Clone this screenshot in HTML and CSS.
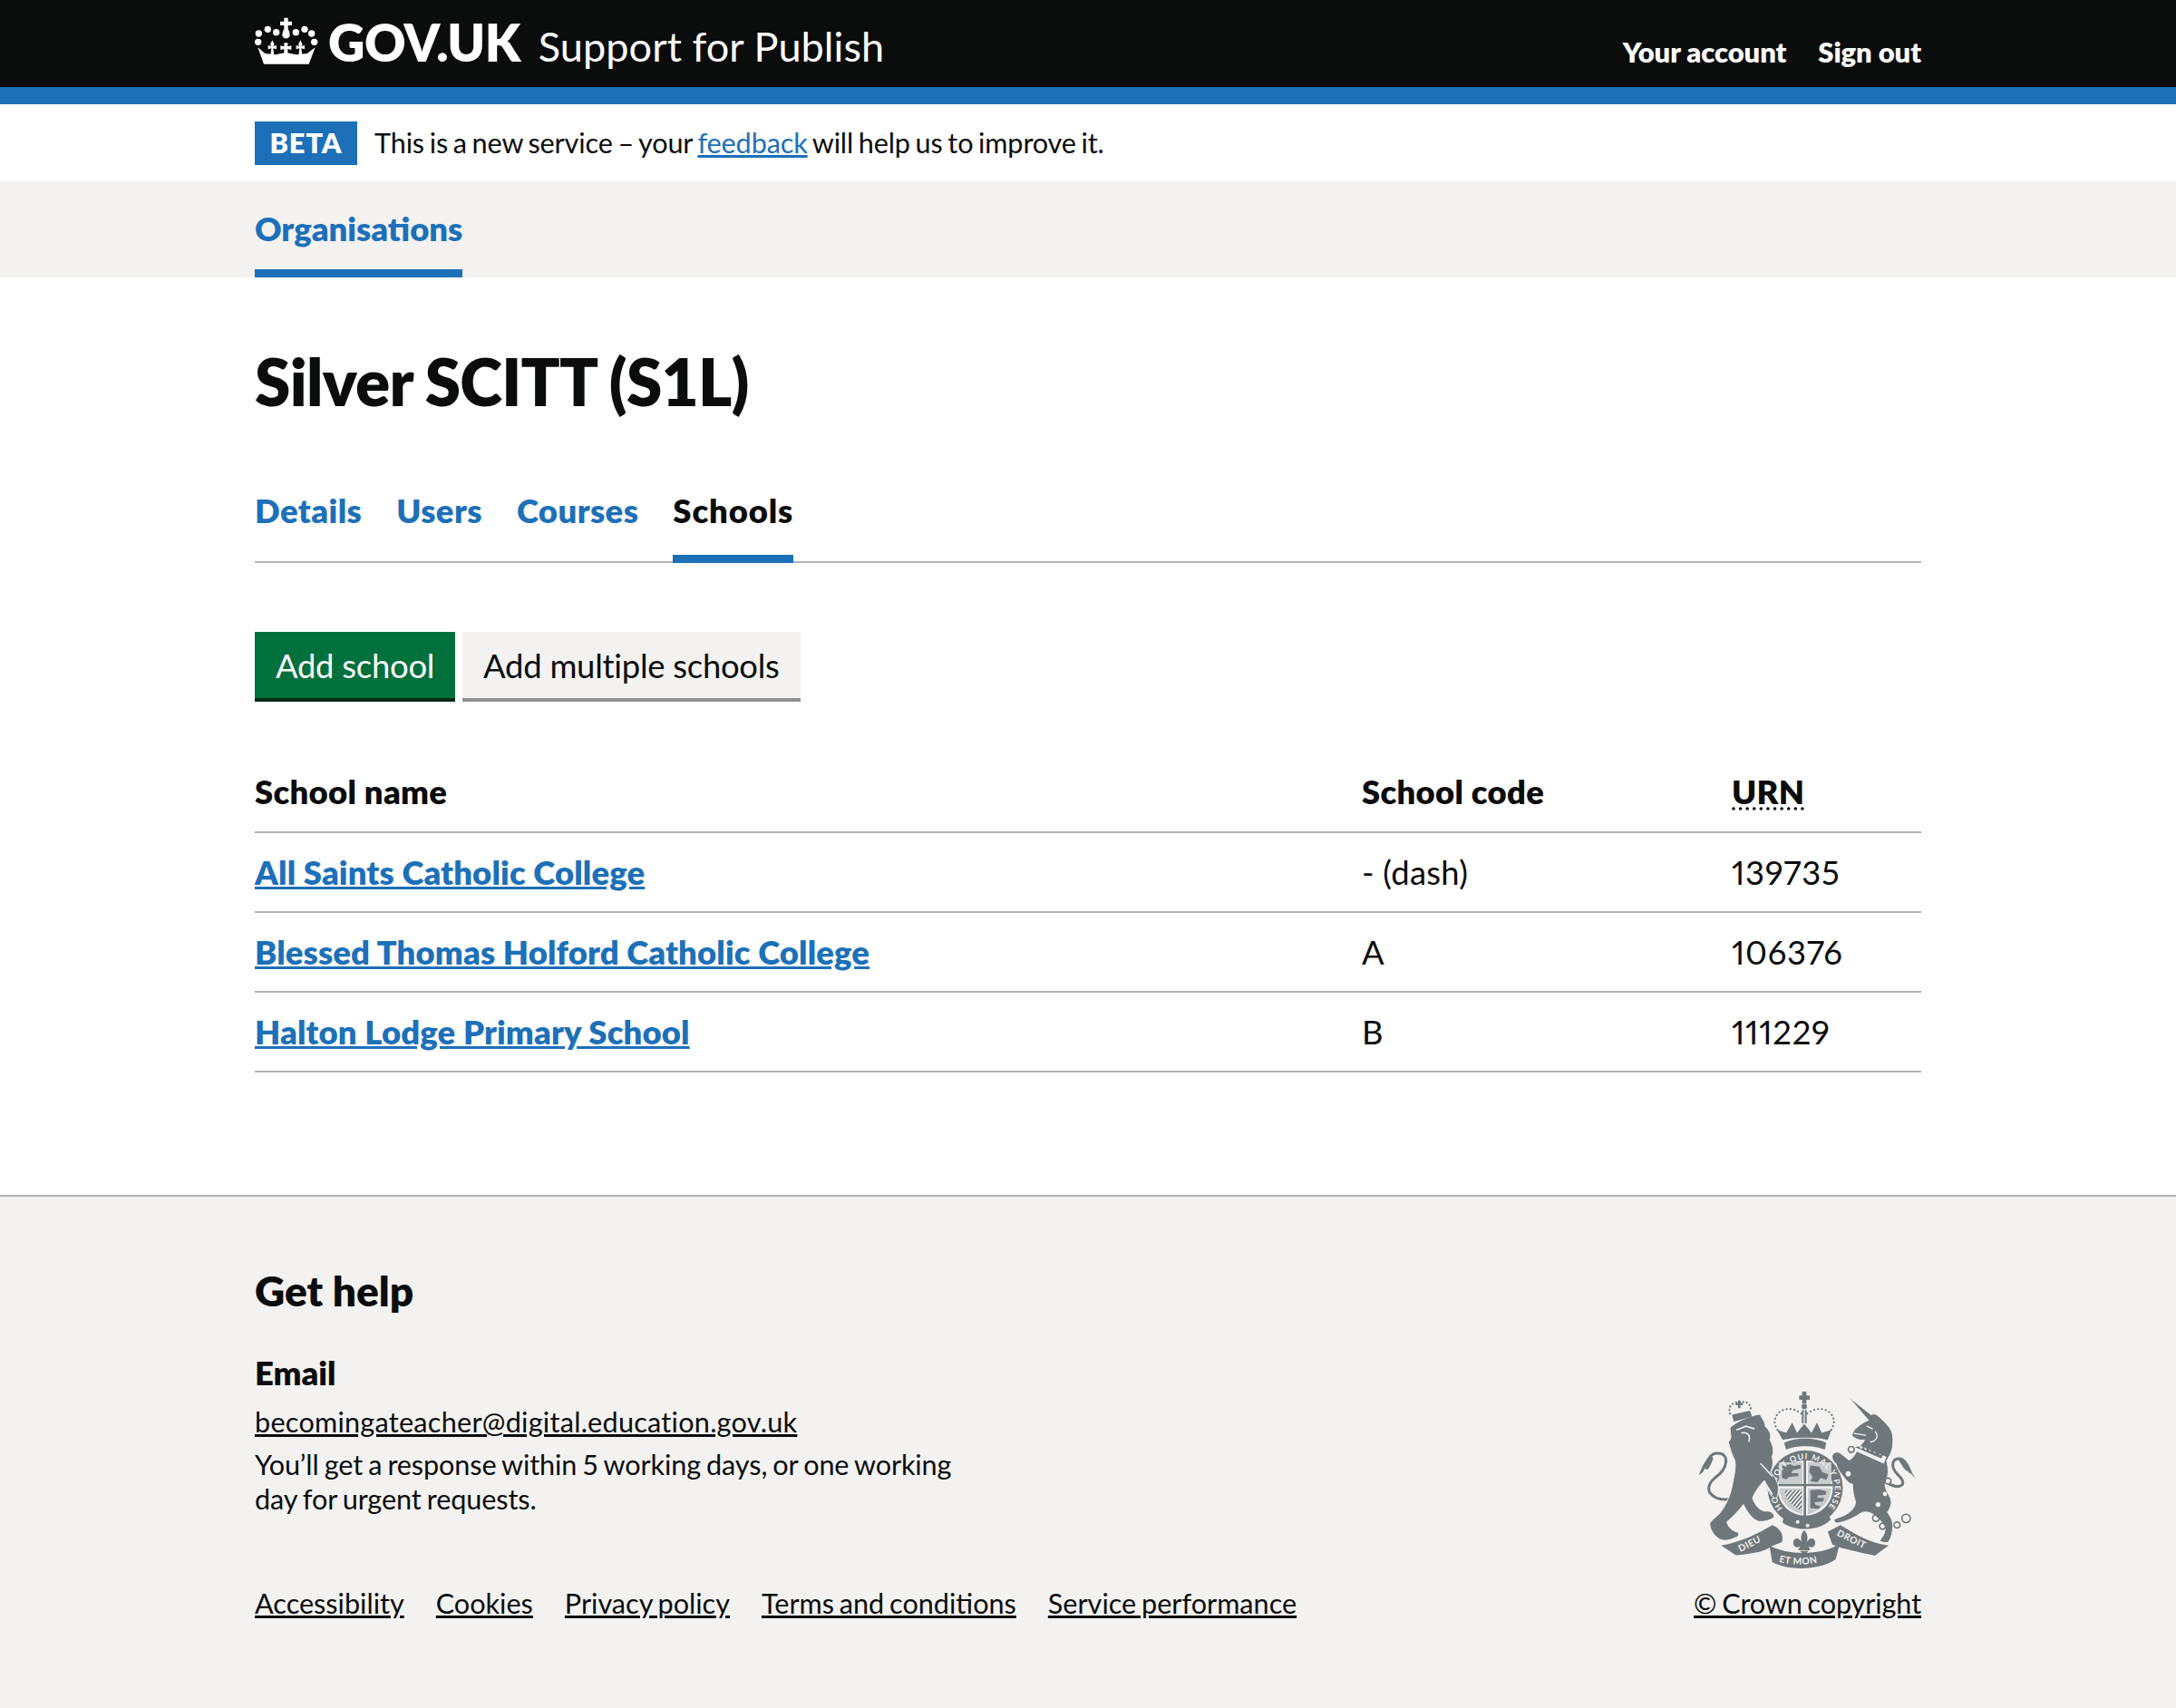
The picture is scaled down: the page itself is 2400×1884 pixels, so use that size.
FILE: index.html
```html
<!DOCTYPE html>
<html lang="en">
<head>
<meta charset="utf-8">
<title>Silver SCITT (S1L) - Support for Publish</title>
<link rel="stylesheet" href="styles.css">
</head>
<body>
<header class="site-header">
  <div class="wrap header-row">
    <div class="brand">
      <svg class="crown" viewBox="32 25 210 165" aria-hidden="true">
        <g fill="#fff">
          <circle cx="45" cy="82" r="11"/><circle cx="75" cy="68" r="11"/><circle cx="103" cy="78" r="11"/>
          <circle cx="168" cy="78" r="11"/><circle cx="197" cy="68" r="11"/><circle cx="220" cy="82" r="11"/>
          <circle cx="43" cy="110" r="11"/><circle cx="229" cy="110" r="11"/>
          <path d="M129 30h13v12h13v13h-13v12c5 8 6 16 6 22a13 13 0 0 1-25 0c0-6 1-14 6-22V55h-13V42h13z"/>
          <path d="M42 128L66 148L100 152L135 145L170 152L205 148L232 128L211 183H62Z"/>
          <path d="M90 104l7 14-4 6 11-3v13l-11-3 3 24h-12l3-24-11 3v-13l11 3-4-6z"/>
          <path d="M183 104l7 14-4 6 11-3v13l-11-3 3 24h-12l3-24-11 3v-13l11 3-4-6z"/>
          <path d="M129 113h12v12l12-3v14l-12-3v18h-12v-18l-12 3v-14l12 3z"/>
        </g>
      </svg>
      <span class="logotype">GOV.UK</span>
      <span class="service">Support for Publish</span>
    </div>
    <nav class="account">
      <a href="#">Your account</a>
      <a href="#">Sign out</a>
    </nav>
  </div>
</header>

<div class="wrap phase">
  <strong class="tag">BETA</strong>
  <span class="phase-text">This is a new service – your <a href="#">feedback</a> will help us to improve it.</span>
</div>

<nav class="primary">
  <div class="wrap"><a class="primary-item" href="#">Organisations</a></div>
</nav>

<main class="wrap main">
  <h1 class="title">Silver SCITT (S1L)</h1>
  <nav class="tabs">
    <a href="#">Details</a>
    <a href="#">Users</a>
    <a href="#">Courses</a>
    <a href="#" class="current">Schools</a>
  </nav>
  <div class="actions">
    <a class="btn btn-green" href="#">Add school</a>
    <a class="btn btn-grey" href="#">Add multiple schools</a>
  </div>
  <table class="schools">
    <colgroup><col class="c1"><col class="c2"><col class="c3"></colgroup>
    <thead>
      <tr><th>School name</th><th>School code</th><th><abbr title="Unique reference number">URN</abbr></th></tr>
    </thead>
    <tbody>
      <tr><td><a href="#">All Saints Catholic College</a></td><td>- (dash)</td><td>139735</td></tr>
      <tr><td><a href="#">Blessed Thomas Holford Catholic College</a></td><td>A</td><td>106376</td></tr>
      <tr><td><a href="#">Halton Lodge Primary School</a></td><td>B</td><td>111229</td></tr>
    </tbody>
  </table>
</main>

<footer class="footer">
  <div class="wrap">
    <div class="footer-top">
      <div class="help">
        <h2>Get help</h2>
        <h3>Email</h3>
        <p class="mail"><a href="#">becomingateacher@digital.education.gov.uk</a></p>
        <p class="note">You’ll get a response within 5 working days, or one working day for urgent requests.</p>
      </div>
      <svg class="crest" viewBox="100 45 722 590" aria-hidden="true">
        <defs>
          <path id="garterArc" d="M381 432A98 98 0 1 1 529 432"/>
          <path id="mottoCentre" d="M368 610Q450 632 540 600"/>
          <pattern id="harp" width="10" height="10" patternUnits="userSpaceOnUse" patternTransform="rotate(40)">
            <rect width="10" height="10" fill="#f3f2f1"/><rect width="5" height="10" fill="#6f777b"/>
          </pattern>
        </defs>
        <g fill="#6f777b" stroke="none">
          <!-- lion tail -->
          <path fill="none" stroke="#6f777b" stroke-width="9" d="M210 402C150 410 108 372 155 332C200 300 205 250 165 250C148 248 135 262 128 285"/>
          <path d="M102 322C112 296 122 272 142 258L150 266C140 290 134 312 120 300C120 310 112 316 102 322Z"/>
          <!-- unicorn tail -->
          <path fill="none" stroke="#6f777b" stroke-width="9" d="M722 345C770 375 800 355 762 320C735 292 745 265 770 268C790 272 800 300 805 315"/>
          <path d="M820 332C805 310 800 285 775 264L765 272C780 295 790 315 802 308C804 318 812 326 820 332Z"/>
          <!-- central crown -->
          <rect x="445" y="45" width="14" height="40"/>
          <rect x="435" y="58" width="35" height="14"/>
          <circle cx="452" cy="95" r="9"/>
          <rect x="444" y="106" width="6" height="44"/><rect x="454" y="106" width="6" height="44"/>
          <path d="M362 172L392 182L412 148L428 182L452 152L476 182L494 148L510 182L542 172L530 205C490 195 420 195 380 205Z"/>
          <path d="M385 216C420 196 490 196 525 216L520 238C490 222 420 222 392 238Z"/>
          <!-- garter -->
          <circle cx="455" cy="365" r="125"/>
          <path d="M385 450C420 490 490 495 530 450L540 470C500 510 420 510 380 480Z"/>
          <!-- ribbons -->
          <path d="M176 556C250 542 300 515 346 488C372 498 386 522 378 545L340 560C330 572 290 584 225 588Z"/>
          <path d="M336 556C400 590 510 590 570 550L556 602C500 640 400 640 346 612Z"/>
          <path d="M530 510L572 488C620 518 670 548 732 556L686 590C620 576 560 562 545 552Z"/>
          <!-- fleur -->
          <path d="M452 505C465 520 465 535 458 548C470 525 492 530 488 552C484 565 470 565 465 556L472 572H432L439 556C434 565 420 565 416 552C412 530 434 525 446 548C439 535 439 520 452 505Z"/>
          <path d="M437 574H467L452 586Z"/>
        </g>
        <g fill="none" stroke="#6f777b" stroke-width="7" stroke-linecap="round">
          <path stroke-dasharray="0 13" d="M442 118C400 85 350 110 354 152C358 168 366 176 372 180"/>
          <path stroke-dasharray="0 13" d="M462 118C505 85 555 110 550 152C546 168 540 176 534 180"/>
        </g>
        <!-- shield -->
        <circle cx="455" cy="365" r="92" fill="#f3f2f1"/>
        <g fill="#6f777b">
          <path d="M368 356V280H446V356ZM464 280H542V356H464ZM368 366H446V452C400 440 372 410 368 366ZM464 366H542C538 410 510 440 464 452Z" fill="#c9cccd"/>
          <rect x="450" y="268" width="8" height="195"/>
          <rect x="364" y="352" width="182" height="7"/>
          <path d="M378 292l28-6 10 6 24-4v12l-26 6-6 10 24 0v10l-30 2-10 8-14-4z"/>
          <path d="M472 290l30 4 10 18 20 8-6 18-20-6-10 14-24-4 8-14-12-16z"/>
          <path d="M386 372H444V440C410 428 392 404 386 372Z" fill="url(#harp)"/>
          <path d="M472 372l30-2 24 6-4 12-26 2 0 8 22 0-4 12-28 2 4 10 16 2-6 10-28-2z"/>
        </g>
        <g>
          <text class="garter"><textPath href="#garterArc">HONI SOIT QUI MAL Y PENSE</textPath></text>
        </g>
        <!-- lion -->
        <path fill="#6f777b" stroke="#f3f2f1" stroke-width="3" d="M205 165C225 145 270 125 305 120C312 135 325 150 322 160C335 170 345 190 338 205C350 225 352 245 345 262C352 285 345 300 340 312C355 328 368 350 366 372C366 385 362 395 358 400C345 395 335 385 332 370C322 355 322 345 320 340C305 355 290 375 280 398C290 425 305 440 322 442C340 440 352 448 352 462C340 472 320 478 300 476C280 470 262 445 250 420C235 440 215 460 195 478C200 495 212 508 232 512C238 520 230 530 222 530C205 540 185 542 170 535C150 522 138 500 138 482C150 465 165 458 172 448C190 425 205 395 212 360C220 320 225 300 222 275C212 255 205 235 200 212C208 205 210 195 207 185Z"/>
        <g fill="none" stroke="#f3f2f1" stroke-width="5" stroke-linecap="round">
          <path d="M228 172L258 160L285 168"/>
          <path d="M245 182C262 178 275 190 268 210"/>
          <path d="M308 285L345 325"/>
          <path d="M320 345L345 385"/>
        </g>
        <!-- lion crown -->
        <g fill="#6f777b">
          <path d="M212 122L272 108L278 128L218 145Z"/>
          <rect x="232" y="74" width="8" height="26"/><rect x="224" y="82" width="24" height="8"/>
          <path fill="none" stroke="#6f777b" stroke-width="7" stroke-linecap="round" stroke-dasharray="0 12" d="M205 118C195 90 225 75 240 82C262 72 282 95 272 112"/>
        </g>
        <!-- unicorn -->
        <path fill="#6f777b" stroke="#f3f2f1" stroke-width="3" d="M598 62L674 122C680 118 686 118 692 122C710 135 722 148 735 165C748 182 748 205 745 230C742 250 732 262 726 275C730 295 735 320 722 345C716 360 728 380 738 398C745 415 738 432 728 445C740 462 750 480 745 505C742 525 738 535 730 546C718 548 708 545 702 540C712 528 722 512 720 498C715 480 700 468 680 452C668 445 655 442 640 448C620 462 595 475 570 480C560 484 552 480 550 470C565 462 585 458 598 448C612 438 622 425 622 410C615 390 612 370 612 352C600 352 590 338 580 325C570 312 560 300 558 285C548 278 542 265 545 255C552 244 565 244 572 250C585 258 595 270 602 272C615 265 625 248 630 232C640 222 650 212 652 205C640 208 625 205 610 192C612 178 620 168 630 162C640 152 652 146 665 140Z"/>
        <g fill="none" stroke="#f3f2f1" stroke-width="4" stroke-linecap="round">
          <path d="M618 184L655 190"/>
          <path d="M660 160L678 168"/>
          <path d="M688 178C700 195 690 210 672 212"/>
        </g>
        <path d="M630 222L725 262L716 284L622 242Z" fill="#f3f2f1"/>
        <path fill="#6f777b" d="M634 226l7 10 7-9 7 13 9-9 6 13 9-7 6 13 11-7 6 13 13-5-7 16-88-38z"/>
        <g fill="#f3f2f1">
          <circle cx="720" cy="385" r="7"/><circle cx="697" cy="420" r="8"/>
          <circle cx="430" cy="478" r="6"/><circle cx="463" cy="490" r="6"/>
        </g>
        <g fill="none" stroke="#6f777b" stroke-width="5">
          <circle cx="608" cy="237" r="10" fill="#f3f2f1"/><circle cx="598" cy="318" r="11" fill="#f3f2f1"/><circle cx="690" cy="465" r="11"/>
          <circle cx="712" cy="492" r="10"/><circle cx="760" cy="488" r="10"/><circle cx="790" cy="466" r="14"/>
          <circle cx="730" cy="342" r="10" fill="#f3f2f1"/>
        </g>
        <g>
          <text class="motto" transform="translate(240 578) rotate(-27)">DIEU</text>
          <text class="motto"><textPath href="#mottoCentre">ET MON</textPath></text>
          <text class="motto" transform="translate(558 522) rotate(26)">DROIT</text>
        </g>
      </svg>
    </div>
    <div class="footer-bottom">
      <nav class="footer-links">
        <a href="#">Accessibility</a>
        <a href="#">Cookies</a>
        <a href="#">Privacy policy</a>
        <a href="#">Terms and conditions</a>
        <a href="#">Service performance</a>
      </nav>
      <a class="copyright" href="#">© Crown copyright</a>
    </div>
  </div>
</footer>
</body>
</html>
```

FILE: styles.css
```css
* { box-sizing: border-box; }
html, body { margin: 0; padding: 0; }
body {
  font-family: Lato, "Noto Sans", sans-serif;
  color: #0b0c0c;
  background: #fff;
  font-size: 36px;
}
a { color: inherit; }
.wrap { width: 1838px; margin: 0 auto; }

.site-header { background: #0b0c0c; border-bottom: 19px solid #1d70b8; height: 115px; color: #fff; }
.header-row { display: flex; justify-content: space-between; height: 96px; }
.brand { display: flex; align-items: center; height: 96px; }
.crown { width: 70px; height: 55px; margin-top: -6px; }
.logotype { font-weight: 800; font-size: 56px; margin-left: 11px; margin-top: -4px; letter-spacing: -0.5px; }
.service { font-size: 45px; margin-left: 20px; margin-top: 6px; letter-spacing: 0.1px; }
.account { display: flex; gap: 35px; align-items: center; padding-top: 17px; font-size: 31px; font-weight: 800; letter-spacing: -0.1px; }
.account a { text-decoration: none; color: #fff; }

.phase { display: flex; align-items: center; height: 85px; font-size: 30.6px; }
.tag { background: #1d70b8; color: #fff; font-size: 30.6px; font-weight: 800; width: 113px; height: 48px; display: flex; align-items: center; justify-content: center; letter-spacing: 1px; margin-right: 19px; }
.phase-text { word-spacing: -2px; letter-spacing: -0.12px; }
.phase-text a { color: #1d70b8; }

.primary { background: #f3f2f1; height: 106px; }
.primary .wrap { height: 106px; display: flex; }
.primary-item { color: #1d70b8; font-weight: 800; font-size: 36.4px; text-decoration: none; border-bottom: 9px solid #1d70b8; padding-top: 30px; }

.main { padding-top: 77px; padding-bottom: 135px; }
.title { margin: 0; font-size: 71px; line-height: 76px; font-weight: 800; letter-spacing: -0.7px; word-spacing: -1.5px; }
.tabs { display: flex; gap: 38px; margin-top: 82px; border-bottom: 2px solid #b1b4b6; font-size: 36.4px; font-weight: 800; letter-spacing: 0.45px; }
.tabs a { color: #1d70b8; text-decoration: none; margin-bottom: -2px; height: 80px; }
.tabs a.current { color: #0b0c0c; border-bottom: 9px solid #1d70b8; letter-spacing: 0.9px; }

.actions { display: flex; gap: 8px; margin-top: 76px; }
.btn { display: block; height: 77px; line-height: 74px; padding: 0 23px; font-size: 36.4px; letter-spacing: -0.25px; text-decoration: none; }
.btn-green { background: #00703c; color: #fff; box-shadow: inset 0 -4px 0 #002d18; }
.btn-grey { background: #f3f2f1; color: #0b0c0c; box-shadow: inset 0 -4px 0 #929191; }

.schools { width: 1838px; table-layout: fixed; border-collapse: collapse; margin-top: 57px; font-size: 36.4px; }
.c1 { width: 1221px; }
.c2 { width: 408px; }
th, td { text-align: left; padding: 0; height: 88px; border-bottom: 2px solid #b1b4b6; font-weight: 400; font-variant-numeric: proportional-nums; }
td { letter-spacing: 0.25px; }
td:last-child { letter-spacing: 0.7px; }
th { font-weight: 800; height: 87px; padding-bottom: 3px; letter-spacing: 0.3px; }
td a { color: #1d70b8; font-weight: 800; letter-spacing: 0.15px; }
abbr { text-decoration: underline dotted; text-underline-offset: 4px; }

.footer { background: #f3f2f1; border-top: 2px solid #b1b4b6; height: 566px; font-size: 30.6px; }
.footer-top { display: flex; justify-content: space-between; align-items: flex-start; }
.help { width: 800px; padding-top: 75px; }
.help h2 { margin: 0; font-size: 46px; line-height: 58px; font-weight: 800; }
.help h3 { margin: 37px 0 0; font-size: 36.4px; line-height: 48px; font-weight: 800; }
.help p { margin: 0; line-height: 38px; }
.help .mail { margin: 12px 0 9px; letter-spacing: 0.26px; }
.help .note { word-spacing: -1.6px; letter-spacing: -0.1px; }
.crest { width: 240px; height: 196px; margin-top: 215px; margin-right: 6px; }
.garter { font-size: 27px; font-weight: 700; fill: #f3f2f1; letter-spacing: 3px; }
.motto { font-size: 31px; font-weight: 700; fill: #f3f2f1; letter-spacing: 1.5px; }
.footer-bottom { display: flex; justify-content: space-between; margin-top: 19px; word-spacing: -2px; }
.copyright { letter-spacing: -0.1px; }
.footer-links { display: flex; gap: 35px; }
```
